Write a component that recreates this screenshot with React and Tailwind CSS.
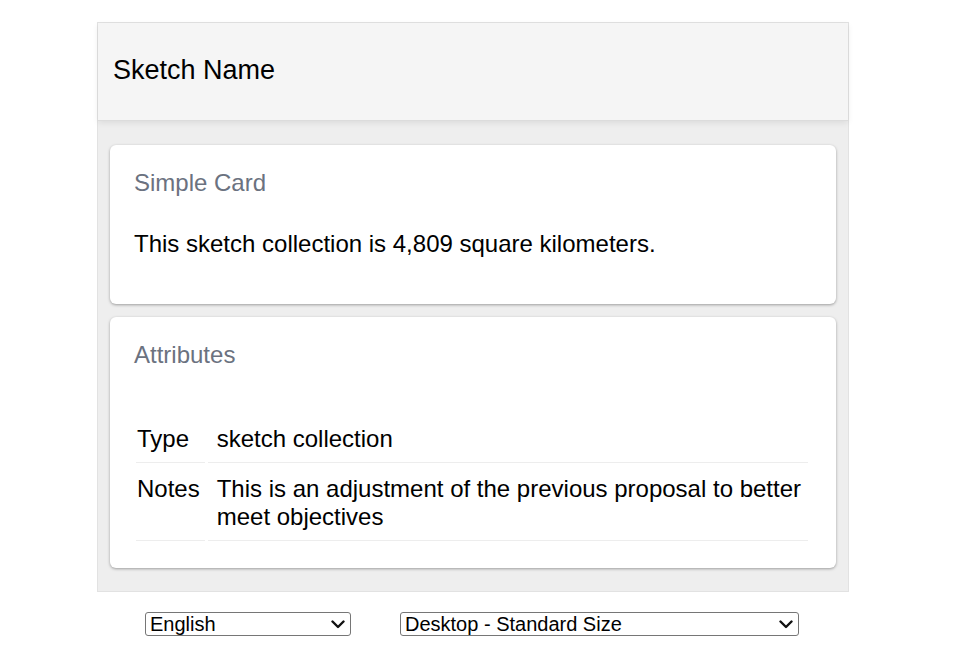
import React from "react";

function Card({ title, children, className = "" }) {
  return (
    <div className={"bg-white rounded-[6px] shadow-[0_1px_3px_rgba(0,0,0,0.35)] px-[24px] pt-[24px] " + className}>
      <div className="text-[24px] leading-[28px] text-[#6b7280]">{title}</div>
      {children}
    </div>
  );
}

function Select({ width, label }) {
  return (
    <div className="relative" style={{ width }}>
      <select
        className="appearance-none w-full h-[24px] text-[20px] leading-[22px] border border-[#767676] rounded-[3px] bg-white text-black pl-[4px] pr-[24px] outline-none"
        defaultValue="a"
        style={{ fontFamily: '"Liberation Sans", Arial, sans-serif' }}
      >
        <option value="a">{label}</option>
      </select>
      <svg className="absolute right-[6px] top-[8px] pointer-events-none" width="14" height="9" viewBox="0 0 14 9">
        <path d="M1.5 1.5 L7 7 L12.5 1.5" fill="none" stroke="#111" strokeWidth="2.4" strokeLinecap="round" strokeLinejoin="round" />
      </svg>
    </div>
  );
}

export default function App() {
  return (
    <div className="w-[946px] pt-[22px] flex flex-col items-center text-black" style={{ fontFamily: '"Liberation Sans", Arial, sans-serif' }}>
      <div className="w-[752px] border border-[#e2e2e2] bg-[#eeeeee]">
        <div className="h-[98px] bg-[#f5f5f5] border-b border-[#dcdcdc] shadow-[0_2px_6px_rgba(0,0,0,0.08)] flex items-center pl-[15px] pb-[3px]">
          <span className="text-[27px] leading-[32px]">Sketch Name</span>
        </div>
        <div className="px-[12px] pt-[24px] pb-[23px] flex flex-col gap-[13px]">
          <Card title="Simple Card" className="h-[159px]">
            <p className="mt-[32px] text-[24px] leading-[29px]">This sketch collection is 4,809 square kilometers.</p>
          </Card>
          <Card title="Attributes" className="pb-[24px]">
            <table className="mt-[41px] w-full border-separate border-spacing-[3px] -ml-[1px] text-[24px] leading-[28px]">
              <tbody>
                <tr>
                  <td className="align-top pl-[1px] pr-[5px] pt-[12px] pb-[9px] border-b border-[#ededed] whitespace-nowrap">Type</td>
                  <td className="align-top pl-[9px] pt-[12px] pb-[9px] border-b border-[#ededed]">sketch collection</td>
                </tr>
                <tr>
                  <td className="align-top pl-[1px] pr-[5px] pt-[9px] pb-[9px] border-b border-[#ededed] whitespace-nowrap">Notes</td>
                  <td className="align-top pl-[9px] pt-[9px] pb-[9px] border-b border-[#ededed]">This is an adjustment of the previous proposal to better meet objectives</td>
                </tr>
              </tbody>
            </table>
          </Card>
        </div>
      </div>
      <div className="mt-[20px] flex gap-[49px] -ml-[2px]">
        <Select width="206px" label="English" />
        <Select width="399px" label="Desktop - Standard Size" />
      </div>
    </div>
  );
}
